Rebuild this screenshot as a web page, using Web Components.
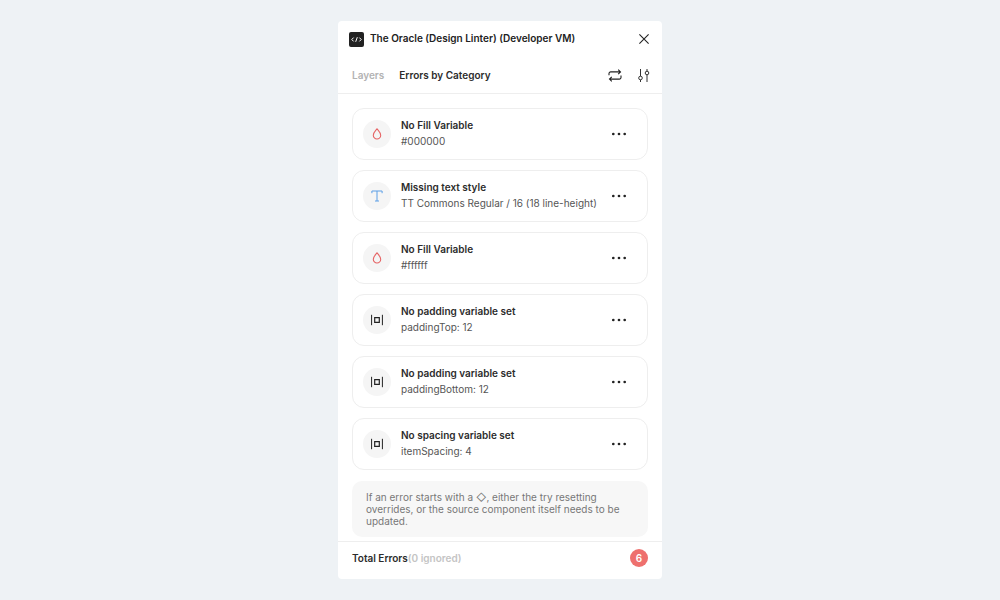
<!DOCTYPE html>
<html lang="en">
<head>
<meta charset="utf-8">
<meta name="viewport" content="width=device-width, initial-scale=1">
<title>The Oracle (Design Linter)</title>
<style>
  body {
    margin: 0;
    min-height: 100vh;
    display: grid;
    place-items: center;
    background: #eef2f5;
    color: #2c2c2c;
    font: 500 10px/16px Inter, "Liberation Sans", sans-serif;
  }
</style>
</head>
<body>
<linter-panel>
  <error-card kind="fill" heading="No Fill Variable">#000000</error-card>
  <error-card kind="text" heading="Missing text style">TT Commons Regular / 16 (18 line-height)</error-card>
  <error-card kind="fill" heading="No Fill Variable">#ffffff</error-card>
  <error-card kind="space" heading="No padding variable set">paddingTop: 12</error-card>
  <error-card kind="space" heading="No padding variable set">paddingBottom: 12</error-card>
  <error-card kind="space" heading="No spacing variable set">itemSpacing: 4</error-card>
  <hint-note slot="note">If an error starts with a ◇, either the try resetting overrides, or the source component itself needs to be updated.</hint-note>
  <total-bar slot="footer" count="6" ignored="0"></total-bar>
</linter-panel>

<script>
const ICONS = {
  logo: `<svg width="15" height="15" viewBox="0 0 15 15" fill="none"><rect width="15" height="15" rx="2" fill="#222"/><path d="M4.600 5.600 2.800 7.500l1.800 1.900M10.400 5.600l1.800 1.900-1.800 1.900M8.300 5.200 6.700 9.800" stroke="#fff"/></svg>`,
  close: `<svg width="10" height="10" viewBox="0 0 10 10" fill="none" stroke="#222" stroke-width="1.100"><path d="M.4.4l9.200 9.200M9.600.4.4 9.600"/></svg>`,
  refresh: `<svg width="14" height="13" viewBox="0 0 14 13" fill="none" stroke="#222" stroke-width="1.100"><path d="M1 6.200V4.600A1.700 1.700 0 0 1 2.700 2.900H12.300M10.200.6l2.300 2.300-2.300 2.300M13 6.500V8.400A1.700 1.700 0 0 1 11.300 10.100H1.700M3.800 7.800 1.500 10.100l2.300 2.300"/></svg>`,
  sliders: `<svg width="12" height="13" viewBox="0 0 12 13" fill="none" stroke="#333"><path d="M2.500 0v7.200M2.500 10.800V13M9 0v2.200M9 5.800V13"/><circle cx="2.500" cy="9" r="1.800"/><circle cx="9" cy="4" r="1.800"/></svg>`,
  more: `<svg width="16" height="4" viewBox="0 0 16 4" fill="#222"><circle cx="2.300" cy="2" r="1.350"/><circle cx="8" cy="2" r="1.350"/><circle cx="13.700" cy="2" r="1.350"/></svg>`,
  fill: `<svg width="10" height="12" viewBox="0 0 10 12" fill="none" stroke="#e66465" stroke-width="1.100"><path d="M5 .8C3.700 2.500 1.300 4.600 1.300 7.300a3.700 3.700 0 0 0 7.400 0C8.700 4.600 6.300 2.500 5 .8z"/></svg>`,
  text: `<svg width="12" height="12" viewBox="0 0 12 12" fill="none" stroke="#5c9fe6"><path d="M.9 3.200V1h10.200v2.200M6 1v10M4 11h4"/></svg>`,
  space: `<svg width="12" height="12" viewBox="0 0 12 12" fill="none" stroke="#222"><path d="M.6 .800v10.400M11.400 .800v10.400"/><path d="M3.700 3.700h4.600v4.600H3.700z" stroke-width="1.200"/></svg>`
};

const BASE = `
  * { box-sizing: border-box; }
  svg { display: block; }
  button {
    display: grid; place-items: center; padding: 0; border: 0;
    background: none; color: inherit; font: inherit; cursor: pointer;
  }`;

class LinterPanel extends HTMLElement {
  constructor() {
    super();
    this.attachShadow({ mode: "open" }).innerHTML = `
      <style>${BASE}
        :host {
          display: block; width: 324px; max-width: 100%;
          background: #fff; border-radius: 4px; overflow: hidden;
        }
        header { display: flex; align-items: center; gap: 6px; padding: 8px 8px 0 11px; }
        h1 { flex: 1; margin: 0; padding-bottom: 2px; font-size: 10px; font-weight: 600; line-height: 18px; color: #222; }
        header button { width: 20px; height: 20px; }
        nav {
          display: flex; align-items: center; gap: 14px;
          padding: 16px 8px 8px 14px; border-bottom: 1px solid #eee;
        }
        nav button { height: 20px; font-weight: 600; color: #b3b3b3; }
        nav button[aria-selected=true] { color: #2c2c2c; }
        .tabs { flex: 1; display: flex; gap: 15px; }
        .tools { display: flex; gap: 9px; }
        .tools button { width: 20px; }
        main { display: grid; gap: 11px; padding: 14px 14px 4px; }
        .list { display: grid; gap: 10px; }
      </style>
      <header>${ICONS.logo}<h1>The Oracle (Design Linter) (Developer VM)</h1>
        <button aria-label="Close">${ICONS.close}</button></header>
      <nav>
        <div class="tabs" role="tablist">
          <button role="tab" aria-selected="false">Layers</button>
          <button role="tab" aria-selected="true">Errors by Category</button>
        </div>
        <div class="tools">
          <button aria-label="Refresh">${ICONS.refresh}</button>
          <button aria-label="Settings">${ICONS.sliders}</button>
        </div>
      </nav>
      <main><div class="list"><slot></slot></div><slot name="note"></slot></main>
      <slot name="footer"></slot>`;
  }
}

class ErrorCard extends HTMLElement {
  constructor() {
    super();
    this.attachShadow({ mode: "open" }).innerHTML = `
      <style>${BASE}
        :host {
          box-sizing: border-box; display: flex; align-items: center; gap: 10px;
          padding: 8px 18px 8px 10px; border: 1px solid #eee; border-radius: 12px;
        }
        .icon {
          display: grid; place-items: center; width: 28px; height: 28px;
          border-radius: 50%; background: #f5f5f5;
        }
        .body { flex: 1; padding-bottom: 2px; white-space: nowrap; }
        h2 { margin: 0; font-size: 10px; line-height: 16px; font-weight: 600; }
        p { margin: 0; font-weight: 400; color: #555; }
        button { width: 20px; height: 20px; }
      </style>
      <span class="icon">${ICONS[this.getAttribute("kind")]}</span>
      <div class="body"><h2></h2><p><slot></slot></p></div>
      <button aria-label="More actions">${ICONS.more}</button>`;
    this.shadowRoot.querySelector("h2").textContent = this.getAttribute("heading");
  }
}

class HintNote extends HTMLElement {
  constructor() {
    super();
    this.attachShadow({ mode: "open" }).innerHTML = `
      <style>
        :host { display: block; padding: 10px 14px; border-radius: 10px; background: #f7f7f7; }
        p { margin: 0; font-weight: 400; line-height: 12px; color: #777; }
      </style>
      <p><slot></slot></p>`;
  }
}

class TotalBar extends HTMLElement {
  constructor() {
    super();
    this.attachShadow({ mode: "open" }).innerHTML = `
      <style>
        :host {
          display: flex; align-items: center; justify-content: space-between;
          padding: 7px 14px 12px; border-top: 1px solid #eee; font-weight: 600;
        }
        .ignored { color: #c4c4c4; }
        .count {
          width: 18px; border-radius: 50%; background: #ee706e;
          color: #fff; line-height: 18px; text-align: center;
        }
      </style>
      <span>Total Errors<span class="ignored">(${this.getAttribute("ignored")} ignored)</span></span>
      <span class="count">${this.getAttribute("count")}</span>`;
  }
}

customElements.define("linter-panel", LinterPanel);
customElements.define("error-card", ErrorCard);
customElements.define("hint-note", HintNote);
customElements.define("total-bar", TotalBar);
</script>
</body>
</html>
